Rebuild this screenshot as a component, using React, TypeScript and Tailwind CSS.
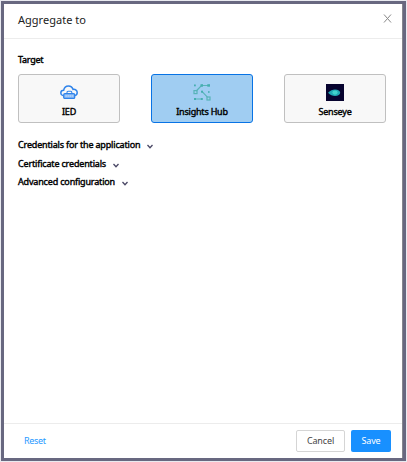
import React from "react";

function IedIcon() {
  return (
    <svg width="18" height="14" viewBox="0 0 18 14" fill="none" stroke="#2f83ea" strokeWidth="1.5" className="block">
      <path d="M3 10.6C1.5 10.2.8 9.2.8 7.900c0-1.600 1.200-2.700 2.900-2.700C4.200 2.500 6 .9 8.400.9c2.300 0 4 1.300 4.600 3.500 2.500-.3 4.200 1 4.200 3.100 0 1.600-.8 2.700-2.200 3.100" />
      <path d="M7 8.500V7.200c0-.6.400-1 1-1h2.800c.6 0 1 .4 1 1v1.300" strokeWidth="1.100" />
      <rect x="3.700" y="8.700" width="11" height="4.700" rx="1.200" fill="#8fbdf6" strokeWidth="1.300" />
      <path d="M5.500 11h7.500" stroke="#cfe3fb" strokeDasharray="1.300 .8" strokeWidth="1" />
    </svg>
  );
}

function HubIcon() {
  return (
    <svg width="18" height="18" viewBox="0 0 18 18" fill="none" stroke="#57b3b8" strokeWidth="1.200" className="block">
      <path d="M3.200 8 8.500 2.500H15M8.700 8.200l5.700 6M2 16h6" />
      <rect x="1" y="7.600" width="3" height="3" />
      <rect x="14" y="14" width="3" height="3" />
      <g fill="#45aeb0" stroke="none">
        <rect x="1" y="1.500" width="1.800" height="1.800" />
        <rect x="7.500" y="1.200" width="2.500" height="2.500" />
        <rect x="14.300" y="1.200" width="2.700" height="2.500" />
        <rect x="8" y="7.700" width="2" height="2" />
        <rect x="15" y="8.200" width="1.600" height="1.600" />
        <rect x="1" y="15" width="2" height="2" />
        <rect x="7.800" y="15" width="2" height="2" />
      </g>
    </svg>
  );
}

function SenseyeIcon() {
  return (
    <svg width="18" height="17" viewBox="0 0 18 17" className="block">
      <path fill="#07042f" d="M0 0h18v17H0z" />
      <path fill="#20a9b4" d="M2 8.700C4.500 6.500 6.500 5.500 9 5.500c3.100 0 5.200 1.400 5.200 3.200S12.100 12 9 12c-2.500 0-4.700-1.200-7-3.300Z" />
      <ellipse cx="9" cy="8.600" rx="2.600" ry="2.100" fill="#41d3cc" />
    </svg>
  );
}

interface TargetProps {
  label: string;
  icon: React.ReactNode;
  selected?: boolean;
}

function Target({ label, icon, selected }: TargetProps) {
  return (
    <button
      className={`flex h-[49px] w-[102px] flex-col items-center rounded-[3px] border pt-[8px] ${
        selected ? "border-[#0873e5] bg-[#a0cdf2]" : "border-[#c0c0c0] bg-[#f8f8f8]"
      }`}
    >
      <span className="flex h-[18px] items-center">{icon}</span>
      <span className="mt-[4px] whitespace-nowrap text-[9px] leading-[14px] tracking-[-0.200px] [-webkit-text-stroke:0.4px_black]">{label}</span>
    </button>
  );
}

function Section({ label }: { label: string }) {
  return (
    <button className="flex h-[18px] items-center gap-[7px] text-[9px] leading-[14px]">
      <span className="whitespace-nowrap tracking-[-0.170px] [-webkit-text-stroke:0.4px_black]">{label}</span>
      <svg width="6" height="5" viewBox="0 0 6 5" fill="none" stroke="#494765" strokeWidth="1.300" className="mt-[2px]">
        <path d="M.5 1 3 3.700 5.500 1" />
      </svg>
    </button>
  );
}

export default function App() {
  return (
    <div className="h-[462px] w-[407px] bg-[#e9eaf0] p-px font-['Noto_Sans',sans-serif] text-black">
      <div className="flex h-[460px] w-[405px] flex-col border-[3px] border-[#686880] bg-white shadow-[inset_-1px_0_0_#85868e]">
        <header className="mr-px flex h-[35px] shrink-0 items-center justify-between border-b border-[#ececec] pr-[10px] pl-[14px]">
          <h1 className="-mt-[2px] text-[11px] tracking-[0.020px] text-[#222]">Aggregate to</h1>
          <svg width="9" height="9" viewBox="0 0 9 9" fill="none" stroke="#888" strokeWidth="1" className="-mt-[5px]">
            <path d="m1 .5 7 8m0-8-7 8" />
          </svg>
        </header>
        <main className="flex-1 px-[14px] pt-[14px]">
          <h2 className="text-[9px] leading-[14px] tracking-[-0.250px] [-webkit-text-stroke:0.4px_black]">Target</h2>
          <div className="mt-[7px] flex gap-[31px]">
            <Target label="IED" icon={<IedIcon />} />
            <Target label="Insights Hub" icon={<HubIcon />} selected />
            <Target label="Senseye" icon={<SenseyeIcon />} />
          </div>
          <div className="mt-[13px] flex flex-col items-start">
            <Section label="Credentials for the application" />
            <div className="mt-px flex flex-col items-start">
              <Section label="Certificate credentials" />
              <Section label="Advanced configuration" />
            </div>
          </div>
        </main>
        <footer className="mr-px flex h-[35px] shrink-0 items-center justify-between border-t border-[#ececec] pr-[11px] pl-[20px] text-[9px]">
          <button className="tracking-[-0.350px] text-[#2699ff]">Reset</button>
          <div className="flex gap-[6px]">
            <button className="h-[22px] w-[49px] rounded-[2px] border border-[#d5d5d5] tracking-[-0.150px] text-[#444]">Cancel</button>
            <button className="h-[22px] w-[40px] rounded-[2px] bg-[#1890ff] tracking-[-0.200px] text-white">Save</button>
          </div>
        </footer>
      </div>
    </div>
  );
}
